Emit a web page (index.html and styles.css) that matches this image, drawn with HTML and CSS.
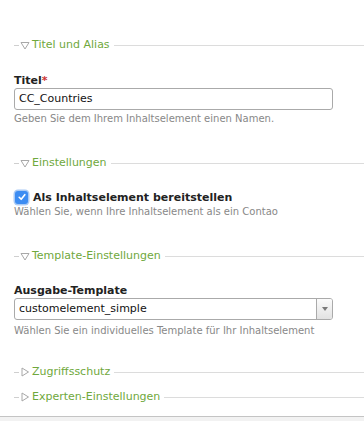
FILE: index.html
```html
<!DOCTYPE html>
<html lang="de">
<head>
    <meta charset="UTF-8">
    <title>Inhaltselement bearbeiten</title>
    <link rel="stylesheet" href="styles.css">
</head>
<body>
    <div class="page">
        <div class="legend">
            <span class="dash"></span>
            <svg class="tri" width="10" height="9" viewBox="0 0 10 9"><path d="M1 1.5 H9 L5 8 Z" fill="none" stroke="#a8a8a8" stroke-width="1" stroke-linejoin="round"/></svg>
            <span class="legend-text">Titel und Alias</span><span class="line"></span>
        </div>
        <div class="widget first-widget">
            <h3 class="label">Titel<span class="req">*</span></h3>
            <div class="text-input">CC_Countries</div>
            <p class="help">Geben Sie dem Ihrem Inhaltselement einen Namen.</p>
        </div>

        <div class="legend">
            <span class="dash"></span>
            <svg class="tri" width="10" height="9" viewBox="0 0 10 9"><path d="M1 1.5 H9 L5 8 Z" fill="none" stroke="#a8a8a8" stroke-width="1" stroke-linejoin="round"/></svg>
            <span class="legend-text">Einstellungen</span><span class="line"></span>
        </div>
        <div class="widget check-widget">
            <div class="check-row">
                <span class="checkbox">
                    <svg width="10" height="10" viewBox="0 0 10 10"><path d="M2.2 5.3 L4.2 7.3 L7.8 2.7" fill="none" stroke="#fff" stroke-width="1.6" stroke-linecap="round" stroke-linejoin="round"/></svg>
                </span>
                <span class="check-label">Als Inhaltselement bereitstellen</span>
            </div>
            <p class="help">Wählen Sie, wenn Ihre Inhaltselement als ein Contao</p>
        </div>

        <div class="legend">
            <span class="dash"></span>
            <svg class="tri" width="10" height="9" viewBox="0 0 10 9"><path d="M1 1.5 H9 L5 8 Z" fill="none" stroke="#a8a8a8" stroke-width="1" stroke-linejoin="round"/></svg>
            <span class="legend-text">Template-Einstellungen</span><span class="line"></span>
        </div>
        <div class="widget select-widget">
            <h3 class="label">Ausgabe-Template</h3>
            <div class="select">
                <span class="select-value">customelement_simple</span>
                <span class="select-btn"><span class="arrow"></span></span>
            </div>
            <p class="help">Wählen Sie ein individuelles Template für Ihr Inhaltselement</p>
        </div>

        <div class="legend closed">
            <span class="dash"></span>
            <svg class="tri" width="10" height="10" viewBox="0 0 10 10"><path d="M2 1 V9 L8.5 5 Z" fill="none" stroke="#a8a8a8" stroke-width="1" stroke-linejoin="round"/></svg>
            <span class="legend-text">Zugriffsschutz</span><span class="line"></span>
        </div>
        <div class="legend closed">
            <span class="dash"></span>
            <svg class="tri" width="10" height="10" viewBox="0 0 10 10"><path d="M2 1 V9 L8.5 5 Z" fill="none" stroke="#a8a8a8" stroke-width="1" stroke-linejoin="round"/></svg>
            <span class="legend-text">Experten-Einstellungen</span><span class="line"></span>
        </div>
    </div>
    <div class="footer"></div>
</body>
</html>
```

FILE: styles.css
```css
* {
    margin: 0;
    padding: 0;
    box-sizing: border-box;
}

body {
    font-family: "DejaVu Sans", Verdana, sans-serif;
    background: #fff;
    color: #333;
    width: 364px;
    height: 421px;
    overflow: hidden;
}

.page {
    padding: 38px 0 12px 14px;
}

/* legends */
.legend {
    display: flex;
    align-items: center;
    height: 14px;
    font-size: 11px;
}
.legend .dash {
    width: 5px;
    height: 1px;
    background: #cfcfcf;
}
.legend .tri {
    margin: 0 2px 0 1px;
}
.legend .legend-text {
    color: #6fa83c;
    padding: 0 4px 0 0;
    line-height: 14px;
}
.legend .line {
    flex: 1;
    height: 1px;
    background: #dcdcdc;
}
.legend.closed + .legend.closed {
    margin-top: 11px;
}

/* widgets */
.widget {
    width: 319px;
    padding-bottom: 31px;
}
.first-widget {
    padding-top: 22px;
}
.check-widget {
    padding-top: 19px;
}
.select-widget {
    padding-top: 21px;
    padding-bottom: 28px;
}

.label {
    font-size: 11px;
    font-weight: bold;
    color: #222;
    line-height: 13px;
    margin-bottom: 1px;
}
.req {
    color: #c33;
}

.text-input {
    height: 22px;
    border: 1px solid #aaa;
    border-radius: 3px;
    font-size: 11px;
    line-height: 20px;
    padding-left: 4px;
    color: #111;
}

.help {
    font-size: 10px;
    color: #888;
    line-height: 13px;
    margin-top: 2px;
}
.select-widget .help {
    margin-top: 4px;
}

.check-row {
    display: flex;
    align-items: center;
    height: 16px;
}
.checkbox {
    width: 13px;
    height: 13px;
    border-radius: 3px;
    background: #3c8cf2;
    box-shadow: 0 0 0 1.5px #a9caf5;
    display: flex;
    align-items: center;
    justify-content: center;
    margin-left: 1px;
    margin-right: 5px;
}
.check-label {
    font-size: 11px;
    font-weight: bold;
    color: #222;
}
.check-widget .help {
    margin-top: 0;
}

.select {
    display: flex;
    height: 22px;
    border: 1px solid #aaa;
    border-radius: 3px;
    overflow: hidden;
}
.select-value {
    flex: 1;
    font-size: 11px;
    line-height: 20px;
    padding-left: 4px;
    color: #111;
}
.select-btn {
    width: 16px;
    border-left: 1px solid #aaa;
    background: linear-gradient(#fbfbfb, #e2e2e2);
    display: flex;
    align-items: center;
    justify-content: center;
}
.arrow {
    width: 0;
    height: 0;
    border-left: 3px solid transparent;
    border-right: 3px solid transparent;
    border-top: 4px solid #7a7a7a;
}

.footer {
    border-top: 1px solid #c4c4c4;
    background: #f2f2f2;
    height: 20px;
}
```
